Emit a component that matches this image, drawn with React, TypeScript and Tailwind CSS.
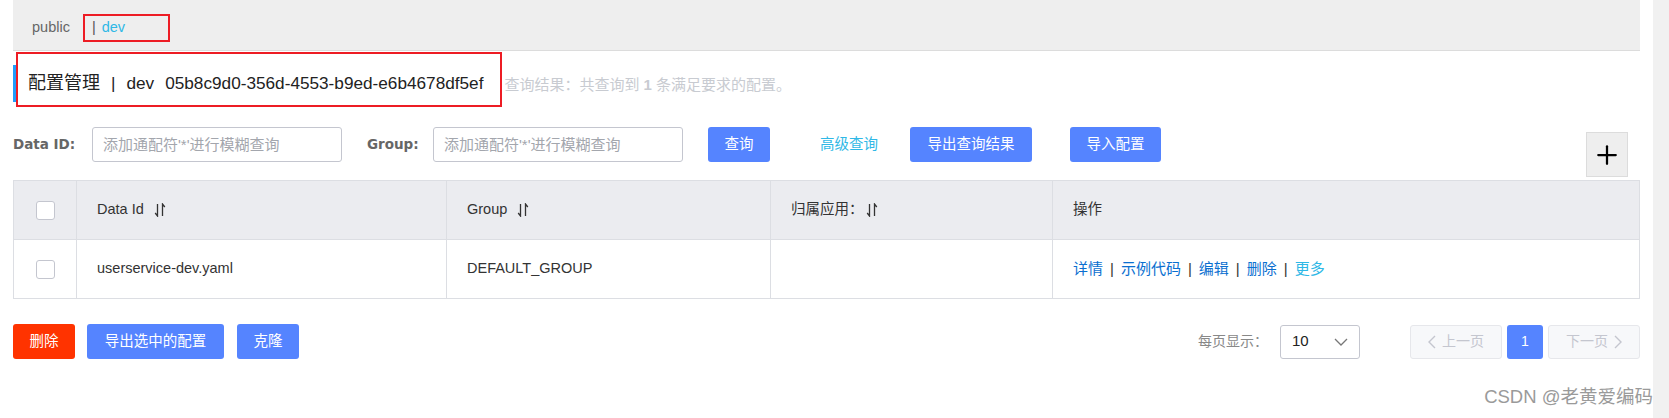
import { Plus } from 'lucide-react'

const cols = 'grid grid-cols-[62px_370px_324px_282px_1fr]'

function SortIcon({ className = 'ml-[10px]' }: { className?: string }) {
  return (
    <svg viewBox="0 0 12 14" className={`${className} h-[14px] w-[12px] text-[#333]`} fill="none" stroke="currentColor" strokeWidth="1.3">
      <path d="M3.5 1v12L1.2 10" />
      <path d="M8.5 13V1l2.3 3" />
    </svg>
  )
}

function Checkbox() {
  return <span className="block h-[19px] w-[19px] rounded-[3px] border border-[#c4c6cf] bg-white" />
}

function Chevron({ dir }: { dir: 'left' | 'right' }) {
  return (
    <svg viewBox="0 0 8 14" className="h-[14px] w-[8px]" fill="none" stroke="currentColor" strokeWidth="1.4">
      {dir === 'left' ? <path d="M7 1L1 7l6 6" /> : <path d="M1 1l6 6-6 6" />}
    </svg>
  )
}

function Header() {
  return (
    <div className="flex h-[51px] items-center border-b border-[#dcdcdc] bg-[#eeeeee] pl-[19px] pt-[6px]">
      <span className="text-[14.5px] text-[#666]">public</span>
      <span className="ml-[13px] flex h-[28px] w-[87px] items-center border-2 border-[#ed1c24] pl-[7px] text-[14.5px]">
        <span className="text-[#555]">|</span>
        <span className="ml-[6px] text-[#2fb8e6]">dev</span>
      </span>
    </div>
  )
}

function Title() {
  return (
    <div className="relative mt-[14px] flex items-center">
      <div className="flex h-[37px] items-center border-l-[3px] border-[#209bfa] pl-[12px] text-[17.2px] text-[#222]">
        <span className="text-[18px]">配置管理</span>
        <span className="mx-[11px]">|</span>
        <span>dev</span>
        <span className="ml-[11px]">05b8c9d0-356d-4553-b9ed-e6b4678df5ef</span>
      </div>
      <span className="ml-[21px] pt-[4px] text-[15px] text-[#c8cbd1]">
        查询结果：共查询到 <b>1</b> 条满足要求的配置。
      </span>
      <div className="pointer-events-none absolute left-[3px] top-[-13px] h-[55px] w-[486px] border-2 border-[#ed1c24]" />
    </div>
  )
}

function Filters() {
  const label = "font-['DejaVu_Sans',sans-serif] text-[13.5px] font-bold text-[#666] leading-[35px]"
  const input =
    'ml-[16px] h-[35px] w-[250px] rounded-[3px] border border-[#c4c6cf] px-[10px] text-[15px] outline-none placeholder:text-[#a3a6ad]'
  const btn = 'flex h-[35px] items-center justify-center rounded-[3px] bg-[#5584ff] text-[14.5px] text-white'
  return (
    <div className="mt-[25px] flex h-[50px] items-start">
      <span className={`${label} w-[63px]`}>Data ID:</span>
      <input className={input} placeholder="添加通配符'*'进行模糊查询" />
      <span className={`${label} ml-[25px] w-[50px]`}>Group:</span>
      <input className={input} placeholder="添加通配符'*'进行模糊查询" />
      <button className={`${btn} ml-[25px] w-[62px]`}>查询</button>
      <span className="ml-[50px] text-[14.5px] leading-[35px] text-[#2fb8e6]">高级查询</span>
      <button className={`${btn} ml-[32px] w-[122px]`}>导出查询结果</button>
      <button className={`${btn} ml-[38px] w-[91px]`}>导入配置</button>
      <button className="ml-auto mr-[12px] mt-[5px] flex h-[45px] w-[42px] items-center justify-center border border-[#dcdcdc] bg-[#eeeeee] text-black">
        <Plus className="h-[30px] w-[30px]" strokeWidth={1.8} />
      </button>
    </div>
  )
}

function ConfigTable() {
  const cell = 'flex items-center border-l border-[#dcdee3] px-[20px]'
  return (
    <div className="mt-[3px] border border-[#dcdee3] text-[14.5px]">
      <div className={`${cols} h-[59px] border-b border-[#dcdee3] bg-[#ebecf0] text-[#333]`}>
        <div className="flex items-center justify-center">
          <Checkbox />
        </div>
        <div className={cell}>
          Data Id <SortIcon />
        </div>
        <div className={cell}>
          Group <SortIcon />
        </div>
        <div className={cell}>
          归属应用：<SortIcon className="ml-[2px]" />
        </div>
        <div className={cell}>操作</div>
      </div>
      <div className={`${cols} h-[58px] bg-white text-[#333]`}>
        <div className="flex items-center justify-center">
          <Checkbox />
        </div>
        <div className={cell}>userservice-dev.yaml</div>
        <div className={cell}>DEFAULT_GROUP</div>
        <div className={cell} />
        <div className={`${cell} text-[15px]`}>
          <span className="text-[#0a6fd0]">详情</span>
          <span className="mx-[7px]">|</span>
          <span className="text-[#0a6fd0]">示例代码</span>
          <span className="mx-[7px]">|</span>
          <span className="text-[#0a6fd0]">编辑</span>
          <span className="mx-[7px]">|</span>
          <span className="text-[#0a6fd0]">删除</span>
          <span className="mx-[7px]">|</span>
          <span className="text-[#2fb8e6]">更多</span>
        </div>
      </div>
    </div>
  )
}

function Footer() {
  const btn = 'flex h-[35px] items-center justify-center rounded-[3px] text-[14.5px] text-white'
  const page =
    'flex h-[34px] w-[92px] items-center justify-center gap-[6px] rounded-[3px] border border-[#e6e7eb] bg-[#f7f8fa] text-[#c4c6cf]'
  return (
    <div className="mt-[25px] flex items-center">
      <button className={`${btn} w-[62px] bg-[#ff3300]`}>删除</button>
      <button className={`${btn} ml-[12px] w-[137px] bg-[#5584ff]`}>导出选中的配置</button>
      <button className={`${btn} ml-[13px] w-[62px] bg-[#5584ff]`}>克隆</button>

      <span className="ml-auto text-[#888]">每页显示：</span>
      <div className="ml-[12px] flex h-[34px] w-[80px] items-center justify-between rounded-[3px] border border-[#c4c6cf] pl-[11px] pr-[11px]">
        <span className="text-[15px] text-[#222]">10</span>
        <svg viewBox="0 0 14 8" className="h-[8px] w-[14px] text-[#777]" fill="none" stroke="currentColor" strokeWidth="1.3">
          <path d="M1 1l6 6 6-6" />
        </svg>
      </div>
      <div className="ml-[50px] flex gap-[5px]">
        <button className={page}>
          <Chevron dir="left" />
          上一页
        </button>
        <button className="flex h-[34px] w-[36px] items-center justify-center rounded-[3px] bg-[#5584ff] text-white">1</button>
        <button className={page}>
          下一页
          <Chevron dir="right" />
        </button>
      </div>
    </div>
  )
}

export default function App() {
  return (
    <div className="flex min-h-[418px] w-full bg-white font-['Liberation_Sans','Noto_Sans_CJK_SC',sans-serif] text-[14px] text-[#333]">
      <main className="relative flex-1 px-[13px]">
        <Header />
        <Title />
        <Filters />
        <ConfigTable />
        <Footer />
        <span className="absolute bottom-[7px] right-0 text-[18.5px] text-[#9a9a9a]">CSDN @老黄爱编码</span>
      </main>
      <div className="w-[16px] shrink-0 bg-[#f1f1f1]" />
    </div>
  )
}
